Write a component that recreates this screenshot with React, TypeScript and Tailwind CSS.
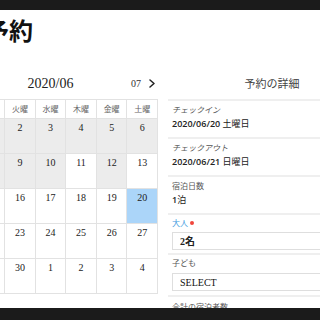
import React from 'react';

const weeks = [
  [31, 1, 2, 3, 4, 5, 6],
  [7, 8, 9, 10, 11, 12, 13],
  [14, 15, 16, 17, 18, 19, 20],
  [21, 22, 23, 24, 25, 26, 27],
  [28, 29, 30, 1, 2, 3, 4],
];

// cells shaded grey (booked) and the selected check-in day
const greyCells: Record<string, boolean> = {
  '0-0': true, '0-1': true, '0-2': true, '0-3': true, '0-4': true, '0-5': true, '0-6': true,
  '1-1': true, '1-2': true, '1-3': true, '1-5': true,
};
const selected = '2-6';

const dayNames = ['日曜', '月曜', '火曜', '水曜', '木曜', '金曜', '土曜'];

const serif = { fontFamily: "'Liberation Serif', 'Noto Sans CJK JP', serif" };
const jp = { fontFamily: "'Noto Sans CJK JP', 'Noto Sans', sans-serif" };
const sans = { fontFamily: "'Open Sans', 'Noto Sans CJK JP', sans-serif" };

function Chevron({ left }: { left?: boolean }) {
  return (
    <svg width="6" height="9" viewBox="0 0 6 9" className="shrink-0">
      <path
        d={left ? 'M5 1 L1 4.5 L5 8' : 'M1 1 L5 4.5 L1 8'}
        fill="none"
        stroke="#222"
        strokeWidth="1.5"
        strokeLinecap="round"
        strokeLinejoin="round"
      />
    </svg>
  );
}

function InfoRow({ label, value, italic }: { label: string; value: React.ReactNode; italic?: boolean }) {
  return (
    <div className="border-t-2 border-[#efefef] px-[4px] pt-[3px] pb-[6px]">
      <div className={`text-[8px] leading-[12px] text-[#555] ${italic ? 'italic' : ''}`} style={jp}>
        {label}
      </div>
      <div className="mt-[1px] text-[9px] leading-[14px] font-semibold text-[#222]" style={sans}>
        {value}
      </div>
    </div>
  );
}

export default function App() {
  return (
    <div className="w-[320px] h-[320px] overflow-hidden flex flex-col bg-white">
      <div className="h-[10px] shrink-0 bg-[#1b1b1b]" />

      <div className="flex-1 overflow-hidden">
        <div className="ml-[-57px] w-[440px]">
          <h1 className="ml-[42px] mt-[6px] text-[24px] leading-[28px] font-bold text-[#111]" style={jp}>
            予約
          </h1>

          <div className="mt-[30px] flex gap-[10px] items-start">
            {/* Calendar */}
            <div className="w-[215px] shrink-0">
              <div className="h-[18px] mb-[7px] flex items-center justify-between px-[3px]" style={serif}>
                <div className="flex items-center gap-[8px] w-[40px]">
                  <Chevron left />
                  <span className="text-[10px] text-[#333]">05</span>
                </div>
                <span className="text-[14px] text-[#222]">2020/06</span>
                <div className="flex items-center justify-end gap-[8px] w-[40px]">
                  <span className="text-[10px] text-[#333]">07</span>
                  <Chevron />
                </div>
              </div>

              <div className="grid grid-cols-7 border-t border-l border-[#e2e2e2]">
                {dayNames.map((d) => (
                  <div
                    key={d}
                    className="h-[19px] border-r border-b border-[#e2e2e2] flex items-center justify-center text-[8px] text-[#666]"
                    style={jp}
                  >
                    {d}
                  </div>
                ))}
                {weeks.map((week, r) =>
                  week.map((day, c) => {
                    const key = `${r}-${c}`;
                    const bg = key === selected ? 'bg-[#abd5f9]' : greyCells[key] ? 'bg-[#ececec]' : 'bg-white';
                    return (
                      <div
                        key={key}
                        className={`h-[35px] border-r border-b border-[#e2e2e2] pt-[3px] text-center text-[10px] leading-[12px] text-[#222] ${bg}`}
                        style={serif}
                      >
                        {day}
                      </div>
                    );
                  })
                )}
              </div>
            </div>

            {/* Reservation details */}
            <div className="w-[208px] shrink-0">
              <div className="h-[18px] mb-[7px] flex items-center justify-center text-[11px] text-[#444]" style={jp}>
                予約の詳細
              </div>

              <InfoRow
                italic
                label="チェックイン"
                value={
                  <>
                    2020/06/20 <span className="font-normal" style={jp}>土曜日</span>
                  </>
                }
              />
              <InfoRow
                italic
                label="チェックアウト"
                value={
                  <>
                    2020/06/21 <span className="font-normal" style={jp}>日曜日</span>
                  </>
                }
              />
              <InfoRow
                label="宿泊日数"
                value={
                  <>
                    1<span className="font-normal" style={jp}>泊</span>
                  </>
                }
              />

              <div className="border-t-2 border-[#efefef] px-[4px] pt-[2px] pb-[3px]">
                <div className="flex items-center text-[8px] leading-[12px] text-[#3d9ae0]" style={jp}>
                  大人
                  <span className="ml-[2px] w-[4px] h-[4px] rounded-full bg-[#f0463c]" />
                </div>
                <div
                  className="mt-[3px] h-[18px] border border-[#dedede] flex items-center pl-[7px] text-[10px] font-bold text-[#222]"
                  style={serif}
                >
                  2名
                </div>
              </div>

              <div className="border-t-2 border-[#efefef] px-[4px] pt-[2px] pb-[4px]">
                <div className="text-[8px] leading-[12px] text-[#555]" style={jp}>
                  子ども
                </div>
                <div
                  className="mt-[4px] h-[18px] border border-[#dedede] flex items-center pl-[7px] text-[10px] text-[#111]"
                  style={serif}
                >
                  SELECT
                </div>
              </div>

              <div className="border-t-2 border-[#efefef] px-[4px] pt-[4px]">
                <div className="text-[8px] leading-[12px] text-[#555]" style={jp}>
                  合計の宿泊者数
                </div>
              </div>
            </div>
          </div>
        </div>
      </div>

      <div className="h-[12px] shrink-0 bg-[#1b1b1b]" />
    </div>
  );
}
